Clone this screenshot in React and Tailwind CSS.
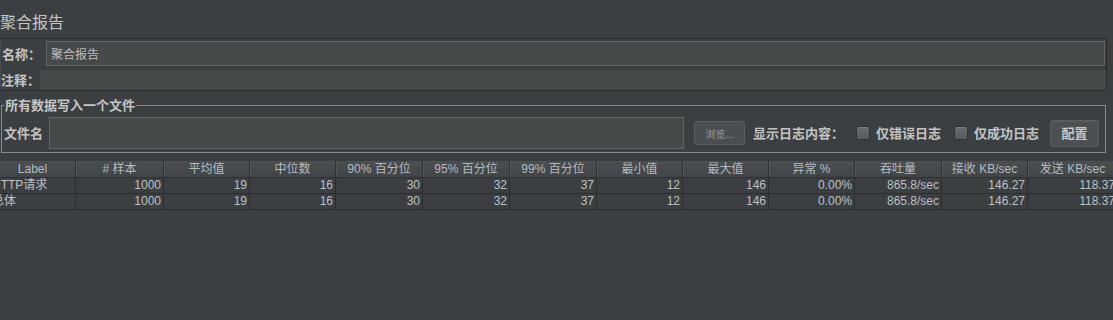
import React from "react";

const cols = [
  ["Label", 86],
  ["# 样本", 88],
  ["平均值", 86],
  ["中位数", 86],
  ["90% 百分位", 87],
  ["95% 百分位", 87],
  ["99% 百分位", 87],
  ["最小值", 86],
  ["最大值", 86],
  ["异常 %", 86],
  ["吞吐量", 87],
  ["接收 KB/sec", 86],
  ["发送 KB/sec", 90],
];

const rows = [
  ["HTTP请求", "1000", "19", "16", "30", "32", "37", "12", "146", "0.00%", "865.8/sec", "146.27", "118.37"],
  ["总体", "1000", "19", "16", "30", "32", "37", "12", "146", "0.00%", "865.8/sec", "146.27", "118.37"],
];

function Checkbox() {
  return (
    <div className="w-[14px] h-[14px] rounded-[2px] border border-[#2f3133] bg-gradient-to-b from-[#6a6d6f] to-[#585b5d] shadow-[inset_0_1px_0_#77797b]" />
  );
}

export default function App() {
  return (
    <div className="w-[1113px] h-[320px] overflow-hidden bg-[#3c3f41] text-[#bbbbbb] font-['Noto_Sans_CJK_SC',sans-serif]">
      <div className="h-[38px] pt-[9px] leading-[24px] text-[16px] text-[#c4c4c4]">聚合报告</div>

      <div className="w-[1107px] h-[53px] border border-[#2b2b2b] border-l-[#4a4d4f]">
        <div className="pt-[2px] flex items-center">
          <div className="w-[45px] pl-[1px] text-[13px] font-bold leading-[16px] text-[#c4c4c4]">名称：</div>
          <div className="flex-1 mr-[1px] h-[25px] border border-[#646464] bg-[#45494a] flex items-center pl-[4px] text-[12px] text-[#bbbbbb]">
            聚合报告
          </div>
        </div>
        <div className="mt-[4px] h-[20px] flex items-center">
          <div className="w-[39px] text-[13px] font-bold leading-[16px] text-[#c4c4c4]">注释：</div>
          <div className="flex-1 h-full bg-[#45494a]" />
        </div>
      </div>

      <fieldset className="mt-[7px] ml-[1px] w-[1105px] border border-[#8a8a8a] px-[2px] pt-[5px] pb-[3px]">
        <legend className="px-[1px] text-[13px] font-bold leading-[14px] text-[#c4c4c4]">所有数据写入一个文件</legend>
        <div className="flex items-center h-[32px]">
          <div className="w-[45px] text-[13px] font-bold text-[#c4c4c4]">文件名</div>
          <div className="w-[635px] h-[32px] border border-[#646464] bg-[#45494a]" />
          <div className="ml-[10px] w-[51px] h-[24px] rounded-[3px] border border-[#5b5e60] bg-[#4a4e50] flex items-center justify-center text-[10px] text-[#9a9c9e]">
            浏览...
          </div>
          <div className="ml-[8px] text-[13px] font-bold text-[#c4c4c4] whitespace-nowrap">显示日志内容：</div>
          <div className="ml-[12px]"><Checkbox /></div>
          <div className="ml-[6px] text-[13px] font-bold text-[#c4c4c4] whitespace-nowrap">仅错误日志</div>
          <div className="ml-[13px]"><Checkbox /></div>
          <div className="ml-[6px] text-[13px] font-bold text-[#c4c4c4] whitespace-nowrap">仅成功日志</div>
          <div className="ml-[11px] w-[49px] h-[27px] rounded-[3px] border border-[#5b5e60] bg-[#4c5052] shadow-[inset_0_1px_0_#56595b] flex items-center justify-center text-[13px] font-bold text-[#c8c8c8]">
            配置
          </div>
        </div>
      </fieldset>

      <div className="mt-[8px] ml-[-10px] w-[1130px] font-['Liberation_Sans','Noto_Sans_CJK_SC',sans-serif] text-[12px]">
        <div className="flex h-[17px] bg-gradient-to-b from-[#4b4f51] to-[#424547] border-b border-[#2e3032]">
          {cols.map(([name, w], i) => (
            <div
              key={i}
              style={{ width: w }}
              className="shrink-0 h-full border-r border-[#2e3032] shadow-[inset_1px_0_0_#55585a] flex items-center justify-center leading-[16px] text-[#b4bac0] whitespace-nowrap"
            >
              {name}
            </div>
          ))}
        </div>
        {rows.map((r, ri) => (
          <div key={ri} className="flex h-[16px] border-b border-[#2b2d2f] bg-[#3c3f41]">
            {r.map((v, i) => (
              <div
                key={i}
                style={{ width: cols[i][1] }}
                className={
                  "shrink-0 h-full border-r border-[#2b2d2f] flex items-center leading-[15px] text-[#bcc0c4] whitespace-nowrap " +
                  (i === 0 ? "justify-start pl-[2px]" : "justify-end pr-[2px]")
                }
              >
                {v}
              </div>
            ))}
          </div>
        ))}
      </div>
    </div>
  );
}
